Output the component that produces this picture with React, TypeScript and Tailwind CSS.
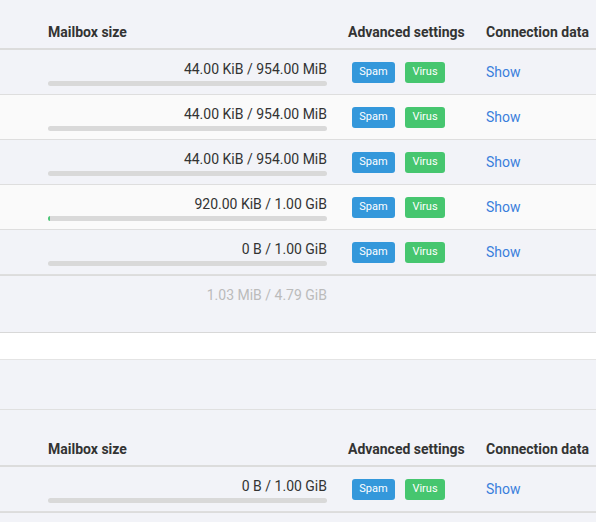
import React from 'react';

type Row = { used: string; pct: number; alt?: boolean };

const rows: Row[] = [
  { used: '44.00 KiB / 954.00 MiB', pct: 0 },
  { used: '44.00 KiB / 954.00 MiB', pct: 0, alt: true },
  { used: '44.00 KiB / 954.00 MiB', pct: 0 },
  { used: '920.00 KiB / 1.00 GiB', pct: 0.0009, alt: true },
  { used: '0 B / 1.00 GiB', pct: 0 },
];

const Header = () => (
  <div className="flex h-[50px] items-end border-b-2 border-[#dcdcdc] pb-[5px] font-bold text-[14px] text-[#333]">
    <div className="w-[348px] shrink-0 pl-[48px]">Mailbox size</div>
    <div className="w-[138px] shrink-0 whitespace-nowrap">Advanced settings</div>
    <div className="whitespace-nowrap">Connection data</div>
  </div>
);

const MailRow = ({ row }: { row: Row }) => (
  <div className={`flex h-[45px] items-start border-b border-[#dedede] ${row.alt ? 'bg-[#fafafa]' : ''}`}>
    <div className="ml-[48px] w-[279px] pt-[9px]">
      <div className="text-right text-[14px] leading-[20px] text-[#333]">{row.used}</div>
      <div className="mt-[2px] h-[5px] w-full overflow-hidden rounded-full bg-[#d9d9d9]">
        <div className="h-full bg-[#4ac776]" style={{ width: `${row.pct * 100}%`, minWidth: row.pct > 0 ? 2 : 0 }} />
      </div>
    </div>
    <div className="ml-[25px] flex w-[134px] gap-[10px] pt-[12px]">
      <span className="flex h-[21px] w-[43px] items-center justify-center rounded-[3px] bg-[#3498db] text-[11px] text-white">Spam</span>
      <span className="flex h-[21px] w-[40px] items-center justify-center rounded-[3px] bg-[#46c66f] text-[11px] text-white">Virus</span>
    </div>
    <div className="pt-[12px] text-[14px] leading-[20px] text-[#3a7fdc]">Show</div>
  </div>
);

export default function App() {
  return (
    <div className="h-[522px] w-[596px] overflow-hidden bg-white" style={{ fontFamily: 'Roboto, "Liberation Sans", sans-serif' }}>
      <div className="bg-[#f2f3f8] shadow-[0_2px_2px_rgba(0,0,0,0.06)] border-b border-[#d8d8d8]">
        <Header />
        {rows.map((r, i) => (
          <MailRow key={i} row={r} />
        ))}
        <div className="h-[57px] border-t border-[#dcdcdc] pt-[9px]">
          <div className="ml-[48px] w-[279px] text-right text-[14px] leading-[20px] text-[#bbb]">1.03 MiB / 4.79 GiB</div>
        </div>
      </div>
      <div className="h-[27px] border-b border-[#e4e4e4] bg-white" />
      <div className="h-[50px] border-b border-[#e0e0e0] bg-[#f2f3f8]" />
      <div className="bg-[#f2f3f8]">
        <div className="h-[7px]" />
        <Header />
        <MailRow row={{ used: '0 B / 1.00 GiB', pct: 0 }} />
        <div className="h-[12px] border-t border-[#dcdcdc]" />
      </div>
    </div>
  );
}
